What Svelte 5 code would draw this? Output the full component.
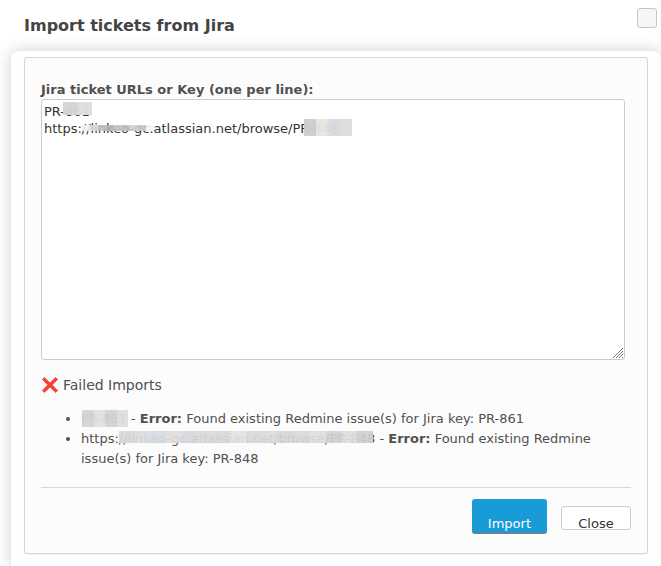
<script>
  let tickets = $state('PR-861\nhttps://linkeo-gc.atlassian.net/browse/PR-848');

  const keyBlocks = ['#d5d4d3', '#dcdee2'];
  const hostBlocks = ['#f3f3f3', '#d6d9df', '#bfc0c4', '#b7b3b0', '#c5c8cd', '#c0bfbe', '#cfd0d1', '#c8c9cb', '#f3f3f3'];
  const issueBlocks = ['#cccdcd', '#e5e5e3', '#d8dce2', '#dcdddd'];
  const failedKeyBlocks = ['#d4d4d5', '#e1e1e0', '#d3d3d3', '#dededf'];
  const failedUrlBlocks = ['#d8d9da', '#dcdde0', '#d7dce2', '#e0dedd', '#d4d8dd', '#dadada', '#d8d9db', '#e3e3e2', '#d9d9d9', '#dbdbdb', '#d7d7d7', '#dadada', '#dfdfdf', '#d2d2d2', '#dedede', '#cfcfd0'];
</script>

{#snippet mask(blocks, name)}
  <span class="mask {name}" aria-hidden="true">
    {#each blocks as color}<i style:background={color}></i>{/each}
  </span>
{/snippet}

<div class="dialog">
  <header>
    <h1>Import tickets from Jira</h1>
    <button class="dismiss" type="button" aria-label="Close dialog"></button>
  </header>

  <main>
    <form onsubmit={(event) => event.preventDefault()}>
      <label for="tickets">Jira ticket URLs or Key (one per line):</label>
      <div class="field">
        <textarea id="tickets" bind:value={tickets} spellcheck="false"></textarea>
        {@render mask(keyBlocks, 'key')}
        {@render mask(hostBlocks, 'host')}
        {@render mask(issueBlocks, 'issue')}
        <svg class="grip" width="12" height="12" viewBox="0 0 12 12" aria-hidden="true">
          <path d="M1 11 11 1M4 11l7-7M7 11l4-4M10 11l1-1" fill="none" stroke="#777" />
        </svg>
      </div>

      <h2>
        <svg width="18" height="18" viewBox="0 0 18 18" aria-hidden="true">
          <path d="M1.4 3.4 3.3 1.5 9 6.9 14.7 1.5 16.6 3.4 11.2 9l5.4 5.6-1.9 1.9L9 11.1l-5.7 5.4-1.9-1.9L6.8 9Z" fill="#f44336" stroke="#f44336" stroke-width=".8" stroke-linejoin="round" />
        </svg>
        Failed Imports
      </h2>
      <ul>
        <li><span class="hidden">PR-861{@render mask(failedKeyBlocks, 'failed-key')}</span> - <strong>Error:</strong> Found existing Redmine issue(s) for Jira key: PR-861</li>
        <li>https:<span class="hidden">//linkeo-gc.atlassian.net/browse/PR-848{@render mask(failedUrlBlocks, 'failed-url')}</span> - <strong>Error:</strong> Found existing Redmine issue(s) for Jira key: PR-848</li>
      </ul>

      <footer>
        <button class="import" type="submit">Import</button>
        <button class="close" type="button">Close</button>
      </footer>
    </form>
  </main>
</div>

<style>
  :global(body) {
    margin: 0;
    background: #fff;
  }
  * {
    box-sizing: border-box;
  }
  .dialog {
    display: flex;
    flex-direction: column;
    min-height: 100vh;
    overflow: hidden;
    color: #505050;
    font: 13px/20px Verdana, "DejaVu Sans", sans-serif;
  }
  header {
    display: flex;
    justify-content: space-between;
    align-items: flex-start;
    height: 51px;
    padding: 8px 4px 0 24px;
  }
  h1 {
    margin: 8px 0 0;
    color: #444;
    font-size: 16px;
    line-height: 20px;
  }
  .dismiss {
    width: 20px;
    height: 20px;
    padding: 0;
    border: 1px solid #c5c5c5;
    border-radius: 3px;
    background: #f6f6f6;
  }
  main {
    flex: 1;
    margin-left: 11px;
    padding: 6px 13px 12px;
    border-radius: 8px 8px 0 0;
    background: #fff;
    box-shadow: 0 0 16px rgba(0, 0, 0, 0.2);
  }
  form {
    padding: 23px 16px 19px;
    border: 1px solid #d0d7de;
    border-radius: 3px;
    background: #fcfcfc;
    box-shadow: 0 1px 2px rgba(0, 0, 0, 0.06);
  }
  label {
    display: block;
    padding-bottom: 1px;
    font-weight: bold;
    line-height: 17px;
  }
  .field {
    position: relative;
    margin-right: 6px;
  }
  textarea {
    display: block;
    width: 100%;
    height: 261px;
    padding: 3px 2px;
    border: 1px solid #ccc;
    border-radius: 3px;
    outline: 0;
    background: #fff;
    color: #333;
    font: 13px/17px Verdana, "DejaVu Sans", sans-serif;
    resize: none;
  }
  .grip {
    position: absolute;
    right: 1px;
    bottom: 1px;
    pointer-events: none;
  }
  .mask {
    position: absolute;
    display: flex;
    pointer-events: none;
  }
  .mask i {
    flex: 1;
  }
  .key {
    top: 3px;
    left: 22px;
    width: 29px;
    height: 13px;
    opacity: 0.96;
  }
  .host {
    top: 26px;
    left: 41px;
    width: 72px;
    height: 6px;
    opacity: 0.9;
  }
  .issue {
    top: 20px;
    left: 263px;
    width: 48px;
    height: 17px;
    opacity: 0.95;
  }
  h2 {
    display: flex;
    align-items: center;
    gap: 4px;
    margin: 15px 0 14px;
    font-size: 14px;
    font-weight: normal;
    line-height: 20px;
  }
  ul {
    margin: 0;
    padding: 0 0 0 40px;
  }
  .hidden {
    position: relative;
  }
  .failed-key {
    top: -1px;
    left: 1px;
    width: 46px;
    height: 17px;
    opacity: 0.94;
  }
  .failed-url {
    top: 0;
    left: 0;
    right: 2px;
    height: 12px;
    opacity: 0.92;
  }
  footer {
    display: flex;
    justify-content: flex-end;
    align-items: flex-end;
    gap: 14px;
    margin-top: 18px;
    padding-top: 11px;
    border-top: 1px solid #d7d7d7;
  }
  footer button {
    min-width: 70px;
    border-radius: 3px;
    font: 13px/16px Verdana, "DejaVu Sans", sans-serif;
  }
  .import {
    height: 35px;
    padding: 16px 16px 0;
    border: 0;
    border-bottom: 2px solid #5c879b;
    background: #189bd7;
    color: #fff;
  }
  .close {
    height: 24px;
    margin-bottom: 4px;
    padding: 12px 16px 0;
    border: 1px solid #ccc;
    background: #fff;
    color: #333;
    line-height: 10px;
  }
</style>
